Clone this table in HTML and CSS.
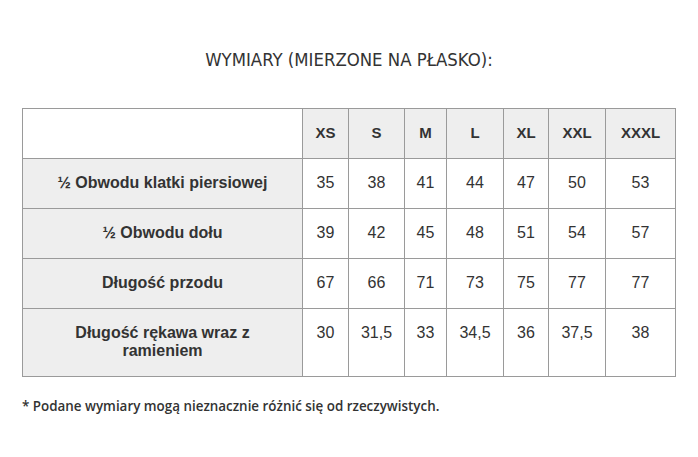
FILE: index.html
```html
<!DOCTYPE html>
<html lang="pl">
<head>
<meta charset="utf-8">
<title>Wymiary</title>
<link rel="stylesheet" href="styles.css">
</head>
<body>
<div class="page">
  <h2 class="title">WYMIARY (MIERZONE NA PŁASKO):</h2>
  <table class="sizes">
    <colgroup>
      <col class="c-label"><col class="c-xs"><col class="c-s"><col class="c-m"><col class="c-l"><col class="c-xl"><col class="c-xxl"><col class="c-xxxl">
    </colgroup>
    <thead>
      <tr>
        <th class="blank"></th><th>XS</th><th>S</th><th>M</th><th>L</th><th>XL</th><th>XXL</th><th>XXXL</th>
      </tr>
    </thead>
    <tbody>
      <tr>
        <th class="label">½ Obwodu klatki piersiowej</th><td>35</td><td>38</td><td>41</td><td>44</td><td>47</td><td>50</td><td>53</td>
      </tr>
      <tr>
        <th class="label">½ Obwodu dołu</th><td>39</td><td>42</td><td>45</td><td>48</td><td>51</td><td>54</td><td>57</td>
      </tr>
      <tr>
        <th class="label">Długość przodu</th><td>67</td><td>66</td><td>71</td><td>73</td><td>75</td><td>77</td><td>77</td>
      </tr>
      <tr>
        <th class="label">Długość rękawa wraz z ramieniem</th><td>30</td><td>31,5</td><td>33</td><td>34,5</td><td>36</td><td>37,5</td><td>38</td>
      </tr>
    </tbody>
  </table>
  <p class="note">* Podane wymiary mogą nieznacznie różnić się od rzeczywistych.</p>
</div>
</body>
</html>
```

FILE: styles.css
```css
html, body {
  margin: 0;
  padding: 0;
  background: #ffffff;
}

.page {
  padding: 49px 22px 0 22px;
  color: #333333;
}

.title {
  margin: 0 0 37px 0;
  font-family: "DejaVu Sans Condensed", "DejaVu Sans", sans-serif;
  font-weight: normal;
  font-size: 18.4px;
  line-height: 22px;
  text-align: center;
  color: #333333;
}

.sizes {
  border-collapse: collapse;
  table-layout: fixed;
  width: 653px;
  font-family: "Liberation Sans", Arial, sans-serif;
  font-size: 16px;
  line-height: 18px;
  color: #333333;
}

.c-label { width: 280px; }
.c-xs { width: 46px; }
.c-s { width: 56px; }
.c-m { width: 42px; }
.c-l { width: 57px; }
.c-xl { width: 45px; }
.c-xxl { width: 57px; }
.c-xxxl { width: 70px; }

.sizes th,
.sizes td {
  border: 1px solid #9a9a9a;
  padding: 15px 0 16px 0;
  text-align: center;
  vertical-align: top;
}

.sizes thead th {
  background: #eeeeee;
  font-weight: bold;
  font-size: 15px;
}

.sizes thead th.blank {
  background: #ffffff;
}

.sizes th.label {
  background: #eeeeee;
  font-weight: bold;
  padding: 15px 25px 16px 25px;
}

.sizes td {
  background: #ffffff;
  font-weight: normal;
}

.note {
  margin: 20px 0 0 0;
  font-family: "Open Sans", "Noto Sans", sans-serif;
  font-weight: 600;
  font-size: 13.4px;
  line-height: 18px;
  color: #333333;
}
```
